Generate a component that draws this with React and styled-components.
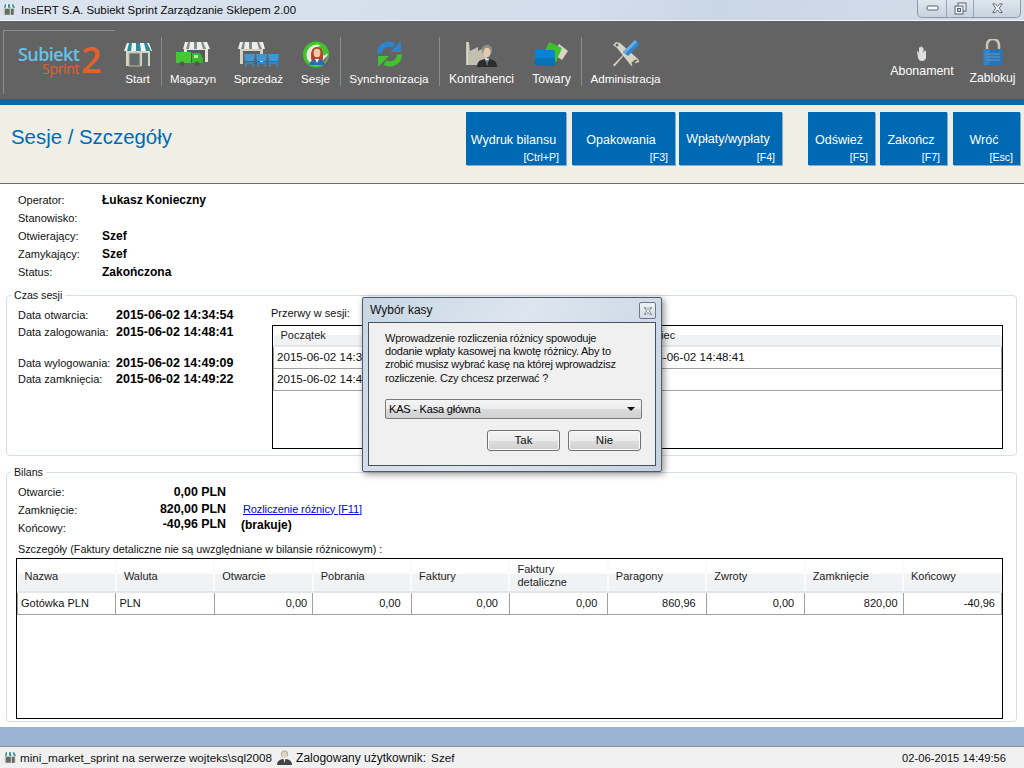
import React from 'react';
import styled, { createGlobalStyle } from 'styled-components';

const GlobalStyle = createGlobalStyle`
  html, body {
    margin: 0;
    padding: 0;
    width: 1024px;
    height: 768px;
    overflow: hidden;
    background: #fff;
    font-family: "Liberation Sans", Arial, sans-serif;
    font-size: 11px;
    color: #000;
  }
  * { box-sizing: border-box; }
`;

const Page = styled.div`
  position: relative;
  display: flex;
  flex-direction: column;
  width: 1024px;
  height: 768px;
`;

const TitleBar = styled.div`
  display: flex;
  align-items: flex-start;
  height: 21px;
  flex: none;
  padding-left: 2px;
  background: linear-gradient(100deg, #dbe4ef 0%, #d0dce9 60%, #c9d6e4 70%, #d3dee9 100%);
  border-bottom: 1px solid #f4f7fa;
`;

const TitleIcon = styled.div`
  display: flex;
  margin-top: 3px;
`;

const TitleText = styled.span`
  margin: 3px 0 0 5px;
  font-size: 11.4px;
  line-height: 15px;
  color: #0a0a0a;
`;

const WindowButtons = styled.div`
  display: flex;
  margin-left: auto;
  margin-right: 3px;
  height: 18px;
  border: 1px solid #8e9aa8;
  border-top: none;
  border-radius: 0 0 5px 5px;
  background: linear-gradient(#dfe6ee, #c8d3df);
`;

const WindowButton = styled.div`
  display: flex;
  align-items: center;
  justify-content: center;
  width: ${p => p.$w}px;
  border-left: ${p => (p.$first ? 'none' : '1px solid #97a3b0')};
`;

const Toolbar = styled.div`
  display: flex;
  align-items: stretch;
  flex: none;
  height: 78px;
  padding: 9px 9px 0 3px;
  background: #636363;
`;

const LogoBox = styled.div`
  position: relative;
  width: 112px;
  height: 64px;
  border-top: 1px solid #8d8d8d;
  border-left: 1px solid #8d8d8d;
  font-family: "Open Sans", sans-serif;
`;

const LogoMain = styled.span`
  position: absolute;
  left: 14px;
  top: 16px;
  font-size: 18px;
  line-height: 15px;
  font-weight: 600;
  letter-spacing: -0.6px;
  color: #66c2ea;
`;

const LogoSub = styled.span`
  position: absolute;
  left: 38px;
  top: 31px;
  font-size: 14px;
  line-height: 13px;
  font-weight: 400;
  letter-spacing: -0.3px;
  color: #e4602a;
`;

const LogoNumber = styled.span`
  position: absolute;
  left: 77px;
  top: 14px;
  font-size: 36px;
  line-height: 30px;
  font-weight: 600;
  color: #e4602a;
`;

const ToolGroup = styled.div`
  display: flex;
  align-items: flex-start;
  margin-left: ${p => p.$ml || 0}px;
`;

const ToolItem = styled.div`
  display: flex;
  flex-direction: column;
  align-items: center;
  width: ${p => p.$w}px;
  margin-right: ${p => p.$mr || 0}px;
  padding-top: ${p => p.$pt || 10}px;
  color: #fff;
  font-size: ${p => p.$size || 11.7}px;
  white-space: nowrap;
`;

const ToolIcon = styled.div`
  display: flex;
  align-items: center;
  justify-content: center;
  height: ${p => p.$h || 28}px;
  margin-bottom: ${p => p.$mb ?? 3}px;
`;

const ToolLabel = styled.span`
  line-height: 16px;
`;

const ToolSep = styled.div`
  width: 1px;
  height: 49px;
  margin: 7px 8px 0 10px;
  background: #8a8a8a;
`;

const Spacer = styled.div`
  flex: 1;
`;

const BlueStrip = styled.div`
  height: 6px;
  flex: none;
  background: #0069b4;
`;

const Header = styled.div`
  display: flex;
  flex: none;
  height: 79px;
  padding: 7px 4px 0 11px;
  background: #f0efe6;
  border-bottom: 1px solid #6d6d68;
`;

const PageTitle = styled.h1`
  margin: 11px auto 0 0;
  font-size: 20.4px;
  line-height: 28px;
  font-weight: 400;
  color: #0069b4;
`;

const ActionButton = styled.div`
  position: relative;
  width: ${p => p.$w}px;
  height: 53px;
  margin-left: ${p => p.$ml}px;
  background: #0069b4;
  box-shadow: 1px 1px 0 #8fa9bf;
  color: #fff;
`;

const ActionLabel = styled.span`
  position: absolute;
  left: 0;
  right: 5px;
  top: ${p => p.$top || 21}px;
  text-align: center;
  font-size: 12.5px;
  line-height: 15px;
`;

const ActionKey = styled.span`
  position: absolute;
  right: 7px;
  bottom: 1px;
  font-size: 10.6px;
  line-height: 13px;
`;

const Content = styled.div`
  flex: 1;
  min-height: 0;
  display: flex;
  flex-direction: column;
  padding: 6px 7px 0 6px;
  background: #fff;
`;

const InfoList = styled.div`
  display: grid;
  grid-template-columns: 84px 1fr;
  grid-template-rows: 19px 18px 18px 18px 18px;
  padding-left: 12px;
  align-items: center;
`;

const Label = styled.span`
  color: #111;
  line-height: 14px;
  white-space: nowrap;
`;

const Strong = styled.span`
  font-size: 12px;
  font-weight: 700;
  line-height: 14px;
  white-space: nowrap;
`;

const DateValue = styled(Strong)`
  font-size: 12.5px;
`;

const Group = styled.fieldset`
  position: relative;
  margin: ${p => p.$mt}px 0 0;
  padding: 0;
  height: ${p => p.$h}px;
  border: 1px solid #d5dfe6;
  border-radius: 4px;
  min-width: 0;
`;

const Legend = styled.legend`
  margin-left: 4px;
  padding: 0 3px 0 3px;
  font-size: 10.6px;
  line-height: 14px;
  color: #111;
`;

const SessionBody = styled.div`
  display: flex;
  padding: 4px 13px 0 11px;
`;

const DateGrid = styled.div`
  display: grid;
  grid-template-columns: 98px 155px;
  grid-template-rows: 17.5px 17.5px 14px 16px 16px;
  align-items: center;
`;

const DateGap = styled.div`
  grid-column: 1 / 3;
`;

const BreakColumn = styled.div`
  flex: 1;
  display: flex;
  flex-direction: column;
  min-width: 0;
`;

const BreakCaption = styled.div`
  height: 19px;
  line-height: 14px;
  color: #111;
`;

const TableFrame = styled.div`
  width: ${p => (p.$w ? `${p.$w}px` : 'auto')};
  height: ${p => p.$h}px;
  margin-left: ${p => p.$ml || 0}px;
  border: 1px solid #000;
  background: #fff;
  overflow: hidden;
`;

const GridTable = styled.table`
  width: 100%;
  table-layout: fixed;
  border-collapse: collapse;
  font-size: 11px;
`;

const Th = styled.th`
  width: ${p => (p.$w ? `${p.$w}px` : 'auto')};
  height: ${p => p.$h}px;
  padding: ${p => p.$pt || 0}px 0 0 7px;
  text-align: left;
  font-weight: 400;
  line-height: 13px;
  color: #1e1e1e;
  background: linear-gradient(#fff 0%, #fff 45%, #f1f2f4 46%, #f1f2f4 100%);
  border-right: 2px solid #fbfbfc;
  border-bottom: 2px solid #e4e7ea;
  &:last-child { border-right: none; }
`;

const Td = styled.td`
  height: 22px;
  padding: 0 ${p => (p.$pr !== undefined ? p.$pr : 0)}px 0 ${p => (p.$pr !== undefined ? 0 : 3)}px;
  text-align: ${p => (p.$pr !== undefined ? 'right' : 'left')};
  border: 1px solid #a0a0a0;
  line-height: 14px;
  color: #111;
  white-space: nowrap;
  overflow: hidden;
`;

const DateCell = styled(Td)`
  font-size: 11.6px;
`;

const BalanceBody = styled.div`
  padding: 4px 0 0 11px;
`;

const BalanceGrid = styled.div`
  display: grid;
  grid-template-columns: 90px 118px 17px 1fr;
  grid-template-rows: 18px 17.5px 18px;
  align-items: center;
`;

const Amount = styled(Strong)`
  font-size: 12.4px;
  text-align: right;
  transform: translateY(${p => p.$up || 0}px);
`;

const LinkText = styled.a`
  color: #0000ee;
  font-size: 11px;
  letter-spacing: -0.1px;
  text-decoration: underline;
  cursor: pointer;
  transform: translateY(-1px);
`;

const Missing = styled(Strong)`
  transform: translateY(-3px);
  margin-left: -2px;
`;

const DetailsCaption = styled.div`
  margin: 5.5px 0 2px;
  height: 14px;
  line-height: 14px;
  font-size: 10.8px;
  color: #111;
`;

const BlueBand = styled.div`
  flex: none;
  height: 20px;
  background: #9ab4d2;
  border-bottom: 1px solid #8b8f95;
`;

const StatusBar = styled.div`
  flex: none;
  display: flex;
  align-items: center;
  height: 21px;
  padding: 0 18px 0 3px;
  background: #f0f0f0;
  line-height: 14px;
  color: #111;
`;

const StatusIcon = styled.div`
  display: flex;
  margin-left: ${p => p.$ml || 0}px;
`;

const StatusText = styled.span`
  margin-left: ${p => p.$ml || 0}px;
  font-size: ${p => p.$size || 11.7}px;
  white-space: nowrap;
`;

const StatusClock = styled.span`
  margin-left: auto;
  font-size: 11.2px;
`;

const Dialog = styled.div`
  position: absolute;
  left: 362px;
  top: 297px;
  width: 300px;
  height: 175px;
  padding: 4px 5px 5px 5px;
  border: 1px solid #4f5b66;
  border-radius: 2px;
  background: linear-gradient(115deg, #c8d6e4 0%, #dde6ef 45%, #c5d3e1 100%);
  box-shadow: 2px 2px 7px rgba(0, 0, 0, 0.45);
  display: flex;
  flex-direction: column;
`;

const DialogHead = styled.div`
  display: flex;
  align-items: flex-start;
  justify-content: space-between;
  height: 20px;
  padding-left: 2px;
  flex: none;
`;

const DialogTitle = styled.span`
  font-size: 12px;
  line-height: 16px;
  color: #111;
`;

const DialogClose = styled.div`
  display: flex;
  align-items: center;
  justify-content: center;
  width: 17px;
  height: 17px;
  border: 1px solid #6c7886;
  border-radius: 2px;
  background: linear-gradient(#eef2f6, #d5dde6);
`;

const DialogBody = styled.div`
  flex: 1;
  padding: 9px 13px 0 16px;
  background: #f0f0f0;
  border: 1px solid #47525c;
`;

const DialogText = styled.p`
  margin: 0;
  font-size: 11px;
  letter-spacing: -0.24px;
  line-height: 13.2px;
  color: #111;
  white-space: nowrap;
`;

const ComboBox = styled.div`
  display: flex;
  align-items: center;
  justify-content: space-between;
  height: 20px;
  margin-top: 14px;
  padding: 0 4px 0 3px;
  border: 1px solid #7a7a7a;
  border-radius: 2px;
  font-size: 11px;
  letter-spacing: -0.2px;
  background: linear-gradient(#f4f4f4 0%, #ececec 50%, #dcdcdc 51%, #cfcfcf 100%);
`;

const ComboArrow = styled.span`
  width: 0;
  height: 0;
  margin-right: 2px;
  border-left: 4px solid transparent;
  border-right: 4px solid transparent;
  border-top: 4px solid #111;
`;

const DialogActions = styled.div`
  display: flex;
  justify-content: flex-end;
  gap: 8px;
  margin-top: 11px;
  padding-right: 1px;
`;

const DialogButton = styled.div`
  display: flex;
  align-items: center;
  justify-content: center;
  width: 73px;
  height: 21px;
  border: 1px solid #707070;
  border-radius: 3px;
  font-size: 11.5px;
  background: linear-gradient(#f3f3f3 0%, #ebebeb 50%, #dddddd 51%, #cfcfcf 100%);
  box-shadow: inset 0 0 0 1px #fbfbfb;
  color: #111;
`;

const Store = ({ w = 30, h = 25 }) => (
  <svg width={w} height={h} viewBox="0 0 30 25">
    <rect x="3" y="8" width="24" height="16" fill="#d9d5c3" />
    <rect x="6" y="11" width="11" height="13" fill="#5f6b6c" stroke="#bdb9a7" />
    <rect x="19" y="11" width="6" height="13" fill="#5f6b6c" />
    <path d="M4 1h22l3 8H1z" fill="#f2f2ee" />
    <path d="M6 1h3L8 9H4zM13 1h4l1 8h-5zM21 1h3l4 8h-5z" fill="#2d8c9a" />
  </svg>
);

const Truck = () => (
  <svg width="36" height="26" viewBox="0 0 36 26">
    <rect x="9" y="7" width="24" height="14" fill="#e6e3d4" />
    <rect x="12" y="9" width="18" height="12" fill="#55585a" />
    <path d="M10 1h22l3 7H8z" fill="#efefe9" />
    <path d="M13 1h2l-1 7h-3zM19 1h3v7h-3zM26 1h2l3 7h-3z" fill="#7f8b8c" />
    <rect x="1" y="11" width="15" height="11" fill="#47c832" />
    <path d="M17 12h8l3 5v5H17z" fill="#3cb42b" />
    <rect x="19" y="14" width="4" height="3" fill="#b7e8a8" />
    <circle cx="7" cy="23" r="2.4" fill="#555" />
    <circle cx="22" cy="23" r="2.4" fill="#555" />
  </svg>
);

const Carts = () => (
  <svg width="44" height="26" viewBox="0 0 44 26">
    <rect x="3" y="7" width="23" height="16" fill="#d5d2c2" />
    <rect x="6" y="10" width="17" height="13" fill="#5b6061" />
    <path d="M3 1h23l2 7H1z" fill="#efefe9" />
    <path d="M6 1h2L7 8H4zM12 1h3v7h-3zM20 1h2l3 7h-3z" fill="#7f8b8c" />
    {[7, 19, 31].map(x => (
      <g key={x}>
        <path d={`M${x} 13h11l-1 7h-9z`} fill="#3f97d3" />
        <rect x={x + 1} y="21" width="9" height="2" fill="#3586bd" />
        <circle cx={x + 2} cy="24.5" r="1.3" fill="#3586bd" />
        <circle cx={x + 9} cy="24.5" r="1.3" fill="#3586bd" />
      </g>
    ))}
  </svg>
);

const Session = () => (
  <svg width="28" height="27" viewBox="0 0 28 27">
    <circle cx="14" cy="13.5" r="13" fill="#45c32e" />
    <circle cx="15" cy="14" r="10.5" fill="#ecebe2" />
    <path d="M20 3l7 8-5 4-6-9z" fill="#45c32e" />
    <path d="M26 14a11.500 11.500 0 0 1-12 11l8-7z" fill="#7a7a7a" />
    <path d="M9 14c0-6 3-8 6-8s6 2 6 8c0 3 0 5-1 6H10c-1-1-1-3-1-6z" fill="#b5432a" />
    <ellipse cx="15" cy="12" rx="3.4" ry="4.2" fill="#f1c8a8" />
    <path d="M7 24c1-5 5-6 8-6s7 1 8 6z" fill="#2a6da8" />
    <path d="M13 18h4l-2 4z" fill="#fff" />
  </svg>
);

const Sync = () => (
  <svg width="27" height="26" viewBox="0 0 27 26">
    <path d="M3.500 12.500A9.500 9.500 0 0 1 18 4.500" fill="none" stroke="#2c85d0" strokeWidth="5" />
    <path d="M25 0v11H14z" fill="#2c85d0" />
    <path d="M23.500 13.500A9.500 9.500 0 0 1 9 21.500" fill="none" stroke="#42c32e" strokeWidth="5" />
    <path d="M2 26V15h11z" fill="#42c32e" />
  </svg>
);

const Contractor = () => (
  <svg width="34" height="26" viewBox="0 0 34 26">
    <path d="M1 1h3l1 9 8-4v4l6-3 3 3v14H1z" fill="#c2bfb0" />
    <path d="M2 1h1v23H2z" fill="#deddd0" />
    <circle cx="22" cy="9" r="5.200" fill="#8e8e86" />
    <ellipse cx="22" cy="11.500" rx="3.600" ry="4.800" fill="#e7c9ad" />
    <path d="M12 26c0-6 4-8 10-8s10 2 10 8z" fill="#2c2c2c" />
    <path d="M20 17.500h4l-2 7z" fill="#e8e8e8" />
    <path d="M21.400 19h1.200l.4 4-1 1-1-1z" fill="#34628f" />
  </svg>
);

const Goods = () => (
  <svg width="36" height="26" viewBox="0 0 36 26">
    <path d="M25 3l9 7-6 9-9-6z" fill="#d9d6c6" />
    <path d="M15 1l13 6-6 14-13-6z" fill="#3fc12b" />
    <rect x="1" y="9" width="20" height="16" rx="1" fill="#0a83cf" />
    <rect x="1" y="17" width="20" height="8" rx="1" fill="#0672b8" />
  </svg>
);

const Tools = () => (
  <svg width="28" height="28" viewBox="0 0 28 28">
    <path d="M14 13L2.500 26.500 1 25l12-12z" fill="#d6d3c2" />
    <path d="M1 5l3-3 4 1 18 16 1.500 3-4 1-1.500 3.500-3-1L5 8z" fill="#d6d3c2" />
    <path d="M26 20l-3 2 .5 5-3-.5-1-4 4-3z" fill="#636363" />
    <circle cx="5" cy="5" r="1.500" fill="#636363" />
    <path d="M23 0l5 4-12 12-5-4z" fill="#2f86c8" />
    <path d="M23 0l2 2L13 14l-2-2z" fill="#66b0e5" />
  </svg>
);

const Hand = () => (
  <svg width="14" height="15" viewBox="0 0 14 15">
    <path d="M2 6c0-1 1-1 1.500 0l.5 2V2c0-1 1.500-1 1.500 0v4V1c0-1 1.500-1 1.500 0v5V2c0-1 1.500-1 1.500 0v5l1-2c.5-1 2-.5 1.500.5L11 12c-.5 2-2 3-4 3-2.500 0-3.500-1.500-4-3z" fill="#dedede" />
  </svg>
);

const Lock = () => (
  <svg width="20" height="26" viewBox="0 0 20 26">
    <path d="M4 11V6a6 6 0 0 1 12 0v5" fill="none" stroke="#c9c7b6" strokeWidth="2.500" />
    <rect x="0.500" y="10" width="19" height="16" rx="1.500" fill="#2c75b4" />
    <rect x="0.500" y="10" width="6" height="16" fill="#3d8bcc" opacity="0.6" />
    <path d="M3 15h14M3 18h14M3 21h14" stroke="#5b9ad2" strokeWidth="1" />
  </svg>
);

const UserSmall = () => (
  <svg width="15" height="15" viewBox="0 0 15 15">
    <circle cx="7.500" cy="4" r="3.500" fill="#a8a8a0" />
    <ellipse cx="7.500" cy="4.500" rx="2.600" ry="3" fill="#e6d2bf" />
    <path d="M0 15c0-4 3-6 7.500-6s7.500 2 7.500 6z" fill="#444" />
    <path d="M6.500 9h2l-1 4z" fill="#eee" />
  </svg>
);

const MinimizeGlyph = () => (
  <svg width="13" height="7" viewBox="0 0 13 7"><rect x="1" y="1" width="11" height="4" rx="1" fill="#f5f7f9" stroke="#5a6572" /></svg>
);

const RestoreGlyph = () => (
  <svg width="13" height="13" viewBox="0 0 13 13">
    <rect x="4" y="1" width="8" height="8" fill="#eef2f6" stroke="#5a6572" />
    <rect x="1" y="4" width="8" height="8" fill="#eef2f6" stroke="#5a6572" />
    <rect x="3.500" y="6.500" width="3" height="3" fill="#c8d3df" stroke="#5a6572" />
  </svg>
);

const CloseGlyph = ({ size = 13 }) => (
  <svg width={size} height={size * 0.8} viewBox="0 0 15 12">
    <path d="M2 1h3l2.500 3L10 1h3L9.500 6 13 11h-3L7.500 8 5 11H2l3.500-5z" fill="#f5f7f9" stroke="#4d5863" />
  </svg>
);

const detailColumns = [
  'Nazwa',
  'Waluta',
  'Otwarcie',
  'Pobrania',
  'Faktury',
  <React.Fragment key="det">Faktury<br />detaliczne</React.Fragment>,
  'Paragony',
  'Zwroty',
  'Zamknięcie',
  'Końcowy',
];
const detailValues = [
  { v: '0,00', pr: 5 },
  { v: '0,00', pr: 10 },
  { v: '0,00', pr: 11 },
  { v: '0,00', pr: 10 },
  { v: '860,96', pr: 10 },
  { v: '0,00', pr: 10 },
  { v: '820,00', pr: 5 },
  { v: '-40,96', pr: 6 },
];

function App() {
  return (
    <Page>
      <GlobalStyle />
      <TitleBar>
        <TitleIcon><Store w={14} h={13} /></TitleIcon>
        <TitleText>InsERT S.A. Subiekt Sprint Zarządzanie Sklepem 2.00</TitleText>
        <WindowButtons>
          <WindowButton $w={28} $first><MinimizeGlyph /></WindowButton>
          <WindowButton $w={27}><RestoreGlyph /></WindowButton>
          <WindowButton $w={47}><CloseGlyph /></WindowButton>
        </WindowButtons>
      </TitleBar>

      <Toolbar>
        <LogoBox>
          <LogoMain>Subiekt</LogoMain>
          <LogoSub>Sprint</LogoSub>
          <LogoNumber>2</LogoNumber>
        </LogoBox>
        <ToolGroup $ml={9}>
          <ToolItem $w={27}><ToolIcon><Store /></ToolIcon><ToolLabel>Start</ToolLabel></ToolItem>
          <ToolSep />
          <ToolItem $w={46} $mr={18} $size={11.4}><ToolIcon><Truck /></ToolIcon><ToolLabel>Magazyn</ToolLabel></ToolItem>
          <ToolItem $w={49} $mr={18}><ToolIcon><Carts /></ToolIcon><ToolLabel>Sprzedaż</ToolLabel></ToolItem>
          <ToolItem $w={29}><ToolIcon><Session /></ToolIcon><ToolLabel>Sesje</ToolLabel></ToolItem>
          <ToolSep />
          <ToolItem $w={80}><ToolIcon><Sync /></ToolIcon><ToolLabel>Synchronizacja</ToolLabel></ToolItem>
          <ToolSep />
          <ToolItem $w={67} $mr={17} $size={12.2}><ToolIcon><Contractor /></ToolIcon><ToolLabel>Kontrahenci</ToolLabel></ToolItem>
          <ToolItem $w={39} $size={12.2}><ToolIcon><Goods /></ToolIcon><ToolLabel>Towary</ToolLabel></ToolItem>
          <ToolSep />
          <ToolItem $w={71}><ToolIcon><Tools /></ToolIcon><ToolLabel>Administracja</ToolLabel></ToolItem>
        </ToolGroup>
        <Spacer />
        <ToolItem $w={64} $mr={16} $pt={15} $size={12.4}><ToolIcon $h={16} $mb={2}><Hand /></ToolIcon><ToolLabel>Abonament</ToolLabel></ToolItem>
        <ToolItem $w={45} $pt={9} $size={12.2}><ToolIcon $h={26} $mb={5}><Lock /></ToolIcon><ToolLabel>Zablokuj</ToolLabel></ToolItem>
      </Toolbar>

      <BlueStrip />

      <Header>
        <PageTitle>Sesje / Szczegóły</PageTitle>
        <ActionButton $w={100} $ml={0}><ActionLabel>Wydruk bilansu</ActionLabel><ActionKey>[Ctrl+P]</ActionKey></ActionButton>
        <ActionButton $w={103} $ml={6}><ActionLabel>Opakowania</ActionLabel><ActionKey>[F3]</ActionKey></ActionButton>
        <ActionButton $w={103} $ml={4}><ActionLabel $top={20}>Wpłaty/wypłaty</ActionLabel><ActionKey>[F4]</ActionKey></ActionButton>
        <ActionButton $w={67} $ml={26}><ActionLabel>Odśwież</ActionLabel><ActionKey>[F5]</ActionKey></ActionButton>
        <ActionButton $w={67} $ml={5}><ActionLabel>Zakończ</ActionLabel><ActionKey>[F7]</ActionKey></ActionButton>
        <ActionButton $w={67} $ml={6}><ActionLabel>Wróć</ActionLabel><ActionKey>[Esc]</ActionKey></ActionButton>
      </Header>

      <Content>
        <InfoList>
          <Label>Operator:</Label><Strong>Łukasz Konieczny</Strong>
          <Label>Stanowisko:</Label><Strong />
          <Label>Otwierający:</Label><Strong>Szef</Strong>
          <Label>Zamykający:</Label><Strong>Szef</Strong>
          <Label>Status:</Label><Strong>Zakończona</Strong>
        </InfoList>

        <Group $mt={7} $h={168}>
          <Legend>Czas sesji</Legend>
          <SessionBody>
            <DateGrid>
              <Label>Data otwarcia:</Label><DateValue>2015-06-02 14:34:54</DateValue>
              <Label>Data zalogowania:</Label><DateValue>2015-06-02 14:48:41</DateValue>
              <DateGap />
              <Label>Data wylogowania:</Label><DateValue>2015-06-02 14:49:09</DateValue>
              <Label>Data zamknięcia:</Label><DateValue>2015-06-02 14:49:22</DateValue>
            </DateGrid>
            <BreakColumn>
              <BreakCaption>Przerwy w sesji:</BreakCaption>
              <TableFrame $h={124} $ml={1}>
                <GridTable>
                  <thead>
                    <tr><Th $h={20} $w={360}>Początek</Th><Th $h={20}>Koniec</Th></tr>
                  </thead>
                  <tbody>
                    <tr><DateCell>2015-06-02 14:34:54</DateCell><DateCell>2015-06-02 14:48:41</DateCell></tr>
                    <tr><DateCell>2015-06-02 14:49:09</DateCell><DateCell /></tr>
                  </tbody>
                </GridTable>
              </TableFrame>
            </BreakColumn>
          </SessionBody>
        </Group>

        <Group $mt={9} $h={257}>
          <Legend>Bilans</Legend>
          <BalanceBody>
            <BalanceGrid>
              <Label>Otwarcie:</Label><Amount>0,00 PLN</Amount><span /><span />
              <Label>Zamknięcie:</Label><Amount $up={-1.5}>820,00 PLN</Amount><span /><LinkText>Rozliczenie różnicy [F11]</LinkText>
              <Label>Końcowy:</Label><Amount $up={-4}>-40,96 PLN</Amount><span /><Missing>(brakuje)</Missing>
            </BalanceGrid>
            <DetailsCaption>Szczegóły (Faktury detaliczne nie są uwzględniane w bilansie różnicowym) :</DetailsCaption>
          </BalanceBody>
          <TableFrame $h={161} $ml={9} $w={987}>
            <GridTable>
              <thead>
                <tr>{detailColumns.map((c, i) => <Th key={i} $h={33} $pt={i === 5 ? 2 : 3}>{c}</Th>)}</tr>
              </thead>
              <tbody>
                <tr>
                  <Td>Gotówka PLN</Td>
                  <Td>PLN</Td>
                  {detailValues.map((d, i) => <Td key={i} $pr={d.pr}>{d.v}</Td>)}
                </tr>
              </tbody>
            </GridTable>
          </TableFrame>
        </Group>
      </Content>

      <BlueBand />
      <StatusBar>
        <StatusIcon><Store w={14} h={13} /></StatusIcon>
        <StatusText $ml={3}>mini_market_sprint na serwerze wojteks\sql2008</StatusText>
        <StatusIcon $ml={5}><UserSmall /></StatusIcon>
        <StatusText $ml={4} $size={12}>Zalogowany użytkownik:</StatusText>
        <StatusText $ml={5}>Szef</StatusText>
        <StatusClock>02-06-2015 14:49:56</StatusClock>
      </StatusBar>

      <Dialog>
        <DialogHead>
          <DialogTitle>Wybór kasy</DialogTitle>
          <DialogClose><CloseGlyph size={10} /></DialogClose>
        </DialogHead>
        <DialogBody>
          <DialogText>
            Wprowadzenie rozliczenia różnicy spowoduje<br />
            dodanie wpłaty kasowej na kwotę różnicy. Aby to<br />
            zrobić musisz wybrać kasę na której wprowadzisz<br />
            rozliczenie. Czy chcesz przerwać ?
          </DialogText>
          <ComboBox>KAS - Kasa główna<ComboArrow /></ComboBox>
          <DialogActions>
            <DialogButton>Tak</DialogButton>
            <DialogButton>Nie</DialogButton>
          </DialogActions>
        </DialogBody>
      </Dialog>
    </Page>
  );
}

export default App;
